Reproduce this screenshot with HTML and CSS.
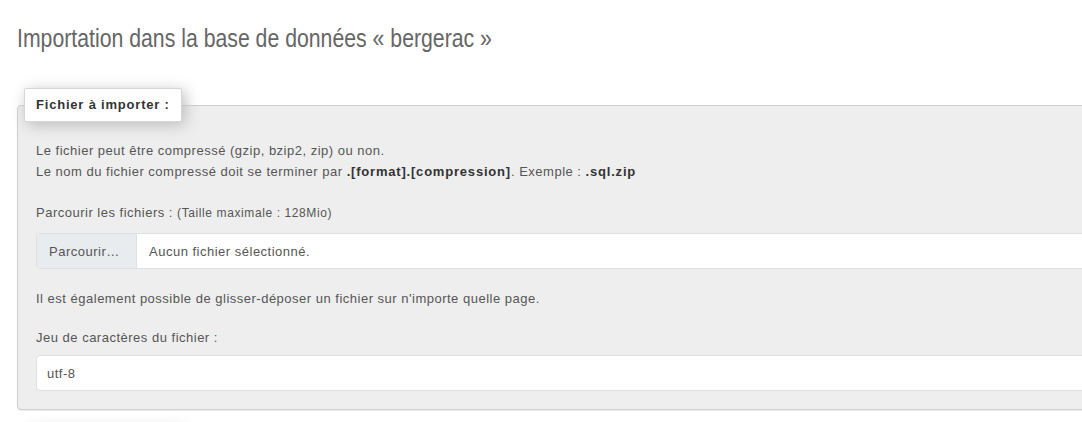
FILE: index.html
```html
<!DOCTYPE html>
<html lang="fr">
<head>
    <meta charset="UTF-8">
    <meta name="viewport" content="width=device-width, initial-scale=1.0">
    <title>Importation - bergerac</title>
    <link rel="stylesheet" href="styles.css">
</head>
<body>
    <h2 class="page-title">Importation dans la base de données « bergerac »</h2>

    <fieldset class="import-box">
        <legend>Fichier à importer :</legend>

        <p class="note">
            Le fichier peut être compressé (gzip, bzip2, zip) ou non.<br>
            Le nom du fichier compressé doit se terminer par <b>.[format].[compression]</b>. Exemple : <b>.sql.zip</b>
        </p>

        <div class="field">
            <label>Parcourir les fichiers : <small>(Taille maximale : 128Mio)</small></label>
            <div class="file-input">
                <span class="file-btn">Parcourir…</span>
                <span class="file-name">Aucun fichier sélectionné.</span>
            </div>
        </div>

        <p class="note drop">Il est également possible de glisser-déposer un fichier sur n'importe quelle page.</p>

        <div class="field charset">
            <label>Jeu de caractères du fichier :</label>
            <div class="select-box">utf-8</div>
        </div>
    </fieldset>

    <!-- haut de la section suivante, juste sous le bord -->
    <fieldset class="import-box next">
        <legend></legend>
    </fieldset>
</body>
</html>
```

FILE: styles.css
```css
html {
    overflow: hidden;
}
body {
    font-family: "Liberation Sans", Arial, sans-serif;
    font-size: 13px;
    color: #555;
    background-color: #fff;
    margin: 0;
    padding: 0 17px;
}
.page-title {
    font-size: 25px;
    line-height: 30px;
    font-weight: normal;
    color: #666;
    margin: 23px 0 35px;
    transform: scaleX(0.85);
    transform-origin: left center;
    white-space: nowrap;
}
.import-box {
    width: 1120px;
    margin: 0;
    padding: 18px;
    background-color: #eee;
    border: 1px solid #cfcfcf;
    border-radius: 4px;
    box-shadow: 0 1px 1px rgba(0, 0, 0, 0.08);
    box-sizing: border-box;
}
.import-box legend {
    margin-left: -12px;
    padding: 8px 11px;
    line-height: 16px;
    font-weight: bold;
    color: #333;
    letter-spacing: 0.8px;
    background-color: #fff;
    border: 1px solid #d6d6d6;
    border-radius: 2px;
    box-shadow: 3px 3px 15px #bbb;
}
.import-box.next {
    margin-top: 18px;
}
.import-box.next legend {
    width: 160px;
    height: 34px;
    box-sizing: border-box;
}
.note {
    margin: 0 0 20px;
    line-height: 21px;
    letter-spacing: 0.5px;
}
.note.drop {
    margin-bottom: 18px;
}
.note b {
    color: #333;
    letter-spacing: 0.8px;
}
.field {
    margin-bottom: 19px;
}
.field:last-child {
    margin-bottom: 0;
}
.field label {
    display: block;
    line-height: 21px;
    letter-spacing: 0.5px;
    margin-bottom: 9px;
}
.field.charset label {
    margin-bottom: 7px;
}
.field small {
    font-size: 12px;
    letter-spacing: 0.6px;
}
.file-input {
    display: flex;
    height: 36px;
    background-color: #fff;
    border: 1px solid #dcdfe3;
    border-radius: 4px;
    box-sizing: border-box;
    overflow: hidden;
}
.file-btn {
    display: flex;
    align-items: center;
    width: 100px;
    padding-left: 12px;
    box-sizing: border-box;
    background-color: #e9ecef;
    border-right: 1px solid #dcdfe3;
    letter-spacing: 0.5px;
}
.file-name {
    display: flex;
    align-items: center;
    padding-left: 12px;
    letter-spacing: 0.5px;
}
.select-box {
    display: flex;
    align-items: center;
    height: 36px;
    padding-left: 10px;
    background-color: #fff;
    border: 1px solid #dcdfe3;
    border-radius: 4px;
    box-sizing: border-box;
    letter-spacing: 0.5px;
}
```
